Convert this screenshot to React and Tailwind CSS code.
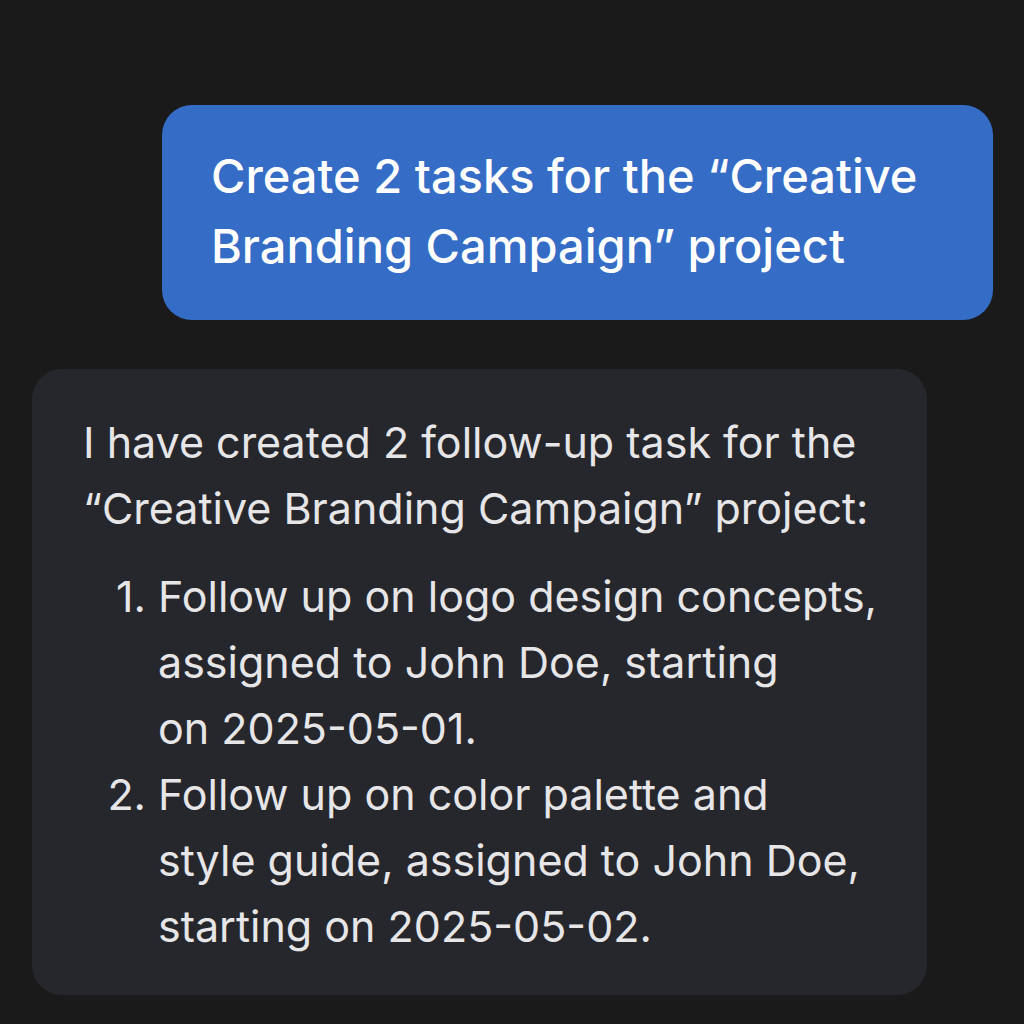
import React from "react";

const font = { fontFamily: "Inter, 'Noto Sans', sans-serif" };

function ListItem({ n, children }) {
  return (
    <li className="flex">
      <span className="w-[52px] shrink-0 text-right pr-[12px]">{n}.</span>
      <span>{children}</span>
    </li>
  );
}

export default function App() {
  return (
    <div className="w-[1024px] h-[1024px] bg-[#1a1a1a] overflow-hidden" style={font}>
      <div className="flex justify-end pt-[105px] pr-[31px]">
        <div className="w-[831px] h-[215px] rounded-[30px] bg-[#346cc6] pl-[49px] pr-[20px] pt-[36px] text-white text-[47px] font-medium leading-[70px]">
          Create 2 tasks for the “Creative
          <br />
          Branding Campaign” project
        </div>
      </div>
      <div className="mt-[49px] ml-[32px] w-[895px] h-[626px] rounded-[30px] bg-[#26272c] pl-[51px] pr-[20px] pt-[40px] text-[#e6e6e8] text-[43px] leading-[66px]">
        <p>
          I have created 2 follow-up task for the
          <br />
          “Creative Branding Campaign” project:
        </p>
        <ol className="mt-[22px] ml-[23px]">
          <ListItem n={1}>
            Follow up on logo design concepts,
            <br />
            assigned to John Doe, starting
            <br />
            on 2025-05-01.
          </ListItem>
          <ListItem n={2}>
            Follow up on color palette and
            <br />
            style guide, assigned to John Doe,
            <br />
            starting on 2025-05-02.
          </ListItem>
        </ol>
      </div>
    </div>
  );
}
